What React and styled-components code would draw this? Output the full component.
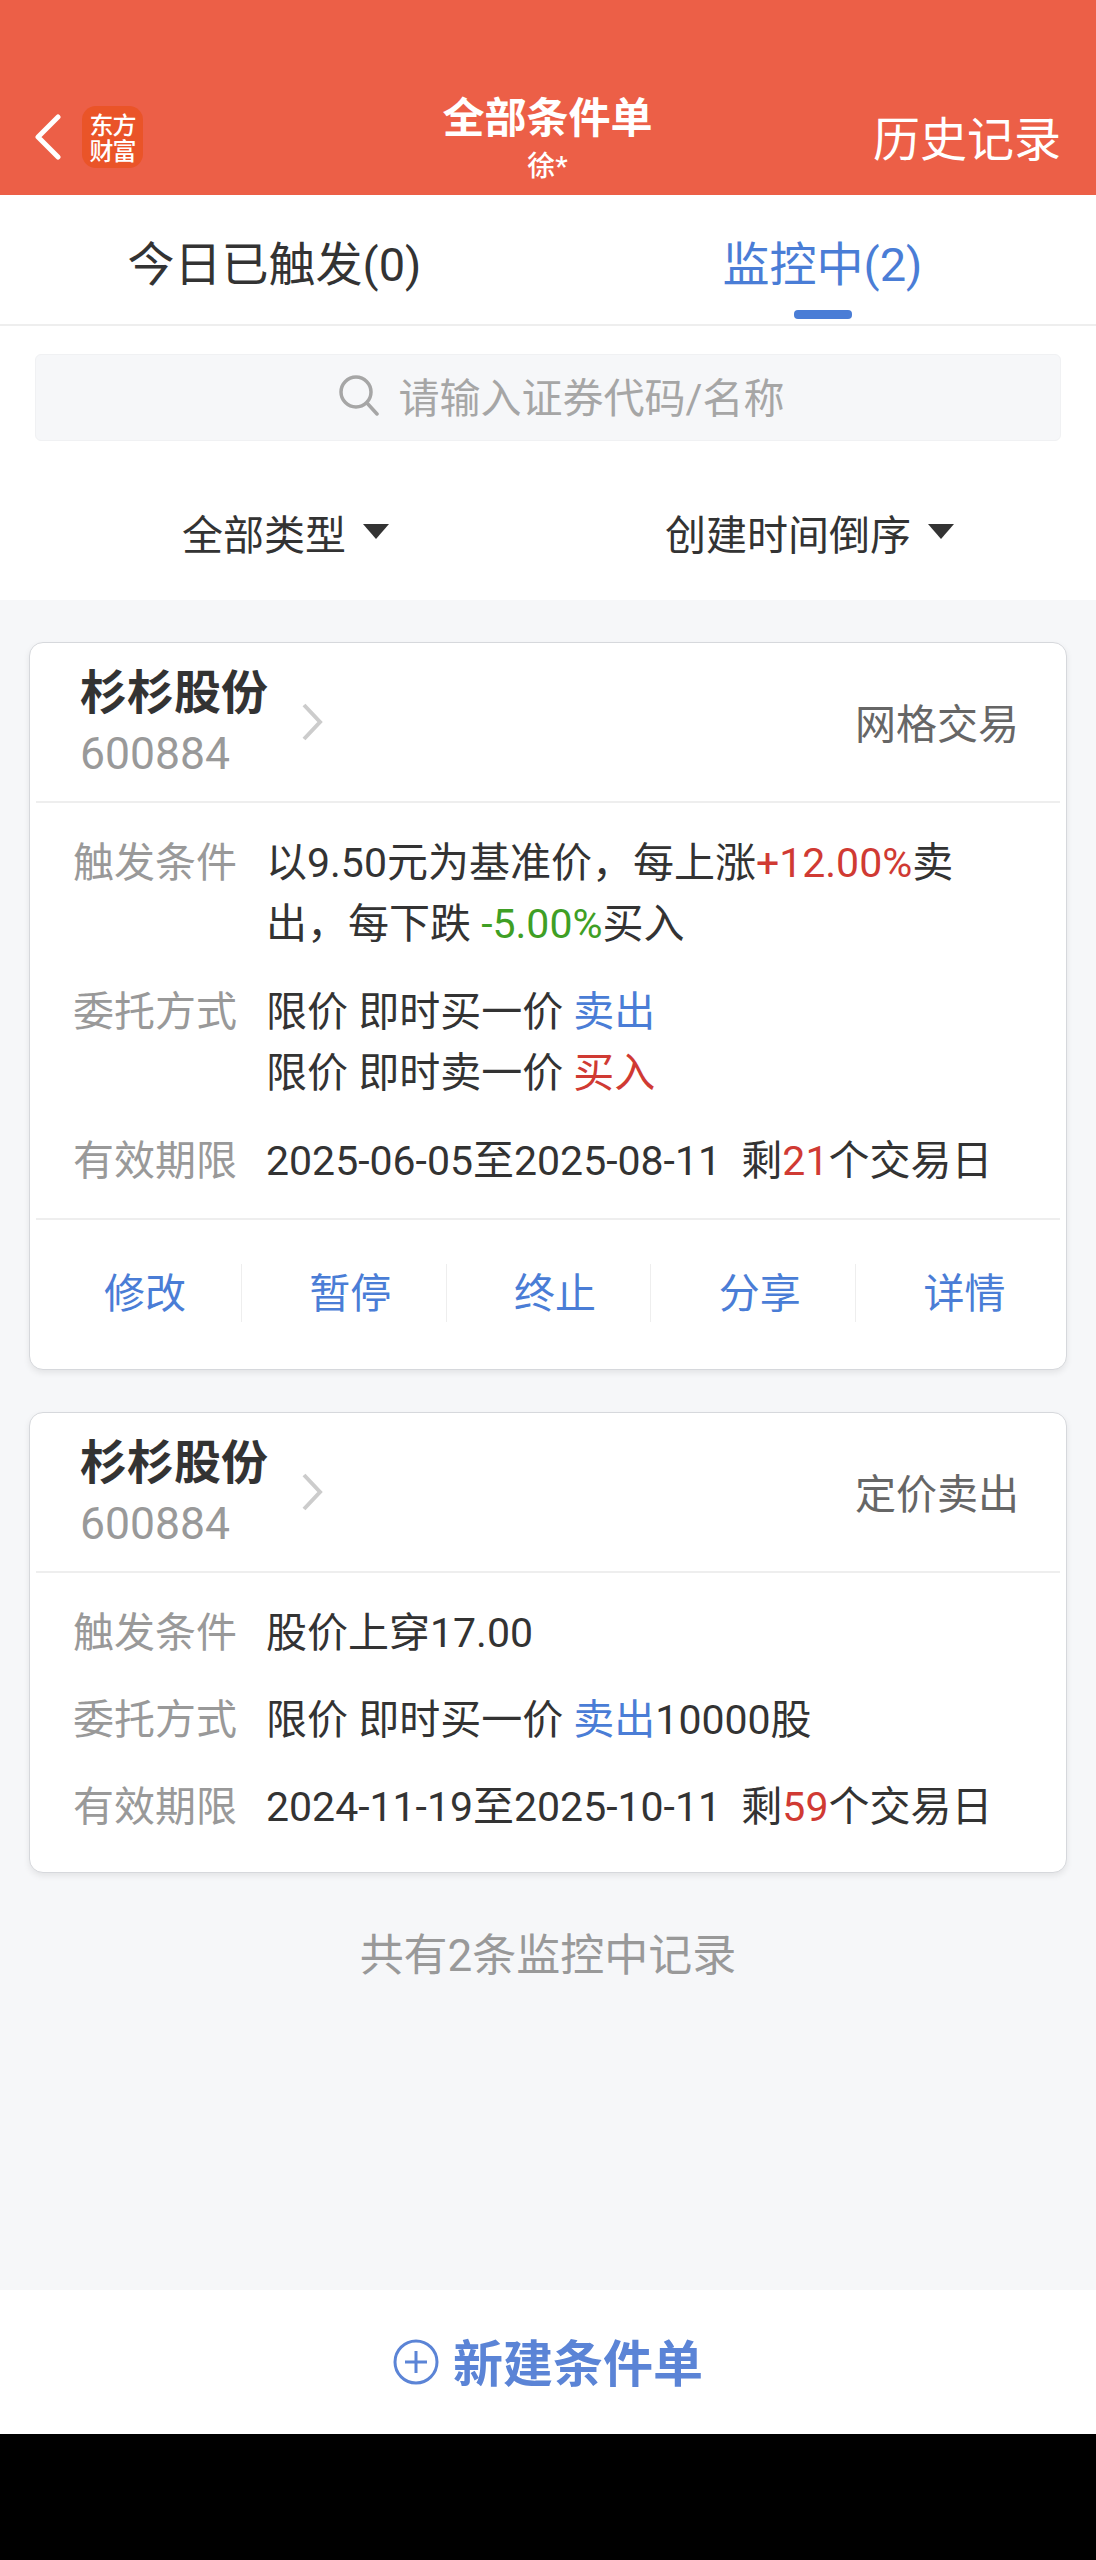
import React from 'react'
import styled, { createGlobalStyle } from 'styled-components'

const Global = createGlobalStyle`
  html, body { margin: 0; padding: 0; background: #000; }
  * { box-sizing: border-box; }
  body { font-family: Roboto, "Noto Sans CJK SC", sans-serif; }
`

const Page = styled.div`
  width: 1096px;
  height: 2560px;
  display: flex;
  flex-direction: column;
  background: #f6f7f9;
  overflow: hidden;
`
const Header = styled.header`
  height: 195px;
  flex: none;
  background: #ec5f47;
  color: #fff;
  display: grid;
  grid-template-columns: 1fr auto 1fr;
  align-items: end;
  padding: 0 35px 0 34px;
`
const HeaderLeft = styled.div`
  display: flex;
  align-items: center;
  gap: 20px;
  padding-bottom: 27px;
`
const Logo = styled.div`
  width: 61px;
  height: 62px;
  border-radius: 14px;
  background: #ea5428;
  color: #fff;
  font-family: "Noto Sans CJK SC", sans-serif;
  font-size: 24px;
  line-height: 26px;
  font-weight: 500;
  text-align: center;
  padding-top: 5px;
  letter-spacing: -1px;
`
const TitleBlock = styled.div`
  text-align: center;
  padding-bottom: 11px;
`
const Title = styled.div`
  font-size: 42px;
  line-height: 62px;
  font-weight: 700;
`
const Subtitle = styled.div`
  font-size: 28px;
  line-height: 34px;
  font-weight: 500;
`
const History = styled.div`
  font-size: 47px;
  line-height: 60px;
  text-align: right;
  padding-bottom: 25px;
`
const Tabs = styled.nav`
  height: 131px;
  flex: none;
  background: #fff;
  border-bottom: 2px solid #eeeeee;
  display: grid;
  grid-template-columns: 549px 1fr;
`
const Tab = styled.div`
  position: relative;
  display: flex;
  justify-content: center;
  align-items: center;
  padding-top: 1px;
  font-size: 47px;
  color: ${p => (p.$active ? '#4a7dd6' : '#333333')};
  ${p => p.$active && `
    &::after {
      content: '';
      position: absolute;
      left: 245px;
      bottom: 5px;
      width: 58px;
      height: 9px;
      border-radius: 4px;
      background: #4a7dd6;
    }
  `}
`
const Controls = styled.section`
  height: 274px;
  flex: none;
  background: #fff;
  padding: 28px 35px 0;
`
const Search = styled.div`
  height: 87px;
  border-radius: 6px;
  background: #f6f7f9;
  border: 1px solid #f0f1f3;
  display: flex;
  align-items: center;
  justify-content: center;
  gap: 19px;
  padding: 0 0 5px 26px;
  color: #a6a6a6;
  font-size: 41px;
`
const Filters = styled.div`
  display: grid;
  grid-template-columns: 501px 1fr;
  height: 159px;
  margin: 0 -35px;
  padding-top: 22px;
  align-items: center;
`
const Filter = styled.div`
  display: flex;
  justify-content: center;
  align-items: center;
  gap: 17px;
  font-size: 41px;
  color: #333333;
  padding-left: ${p => p.$pad}px;
  &::after {
    content: '';
    width: 0;
    height: 0;
    border-left: 13px solid transparent;
    border-right: 13px solid transparent;
    border-top: 15px solid #333333;
  }
`
const List = styled.main`
  flex: 1;
  padding: 42px 29px 0;
  display: flex;
  flex-direction: column;
  gap: 42px;
`
const Card = styled.article`
  background: #fff;
  border: 1px solid #d6d8dc;
  border-radius: 14px;
  box-shadow: 0 3px 6px rgba(0, 0, 0, 0.08);
  padding: 0 6px;
`
const CardHead = styled.div`
  height: 160px;
  border-bottom: 2px solid #eeeeee;
  display: flex;
  align-items: center;
  padding: 2px 41px 0 44px;
`
const Stock = styled.div`
  display: flex;
  flex-direction: column;
`
const StockName = styled.div`
  font-size: 47px;
  line-height: 62px;
  font-weight: 700;
  color: #333333;
`
const StockCode = styled.div`
  font-size: 44.5px;
  line-height: 61px;
  color: #999999;
`
const Chevron = styled.svg`
  width: 22px;
  height: 38px;
  margin: 0 0 3px 33px;
  fill: none;
  stroke: #cccccc;
  stroke-width: 4;
`
const OrderType = styled.div`
  margin: 0 0 5px auto;
  font-size: 41px;
  color: #666666;
`
const Rows = styled.div`
  padding: 30px 0 ${p => p.$bottom}px 37px;
  display: flex;
  flex-direction: column;
  gap: ${p => p.$gap}px;
`
const Row = styled.div`
  display: grid;
  grid-template-columns: 193px 1fr;
  font-size: 41px;
  line-height: 61px;
  color: #333333;
  white-space: nowrap;
`
const Label = styled.div`
  color: #999999;
`
const Red = styled.span`color: #d03a33;`
const Green = styled.span`color: #3f9f25;`
const Blue = styled.span`color: #4a7dd6;`
const Actions = styled.div`
  height: 151px;
  border-top: 2px solid #eeeeee;
  display: grid;
  grid-template-columns: repeat(5, 1fr);
  align-items: center;
  padding-bottom: 4px;
`
const Action = styled.div`
  height: 58px;
  display: flex;
  align-items: center;
  justify-content: center;
  padding: 0 0 5px 13px;
  font-size: 41px;
  color: #4a7dd6;
  & + & { border-left: 1px solid #eeeeee; }
`
const Summary = styled.div`
  text-align: center;
  font-size: 44px;
  line-height: 60px;
  color: #999999;
  margin-top: 11px;
`
const BottomBar = styled.footer`
  height: 144px;
  flex: none;
  background: #fff;
  display: flex;
  align-items: center;
  justify-content: center;
  gap: 14px;
  font-size: 50px;
  font-weight: 700;
  color: #5b84d6;
`
const BottomLabel = styled.span`
  padding-bottom: 5px;
`
const NavSpace = styled.div`
  height: 126px;
  flex: none;
  background: #000;
`

const StockHead = ({ type }) => (
  <CardHead>
    <Stock>
      <StockName>杉杉股份</StockName>
      <StockCode>600884</StockCode>
    </Stock>
    <Chevron viewBox="0 0 22 38"><path d="M3 2l16 17L3 36" /></Chevron>
    <OrderType>{type}</OrderType>
  </CardHead>
)

export default function App() {
  return (
    <Page>
      <Global />
      <Header>
        <HeaderLeft>
          <svg width="28" height="46" viewBox="0 0 28 46" fill="none" stroke="#fff" strokeWidth="5" strokeLinecap="round" strokeLinejoin="round">
            <path d="M24 3L4 23l20 20" />
          </svg>
          <Logo>东方<br />财富</Logo>
        </HeaderLeft>
        <TitleBlock>
          <Title>全部条件单</Title>
          <Subtitle>徐*</Subtitle>
        </TitleBlock>
        <History>历史记录</History>
      </Header>
      <Tabs>
        <Tab>今日已触发(0)</Tab>
        <Tab $active>监控中(2)</Tab>
      </Tabs>
      <Controls>
        <Search>
          <svg width="42" height="42" viewBox="0 0 42 42" fill="none" stroke="#a6a6a6" strokeWidth="3.5" strokeLinecap="round">
            <circle cx="18" cy="18" r="15" />
            <path d="M29 29l10 11" />
          </svg>
          请输入证券代码/名称
        </Search>
        <Filters>
          <Filter $pad={70}>全部类型</Filter>
          <Filter $pad={22}>创建时间倒序</Filter>
        </Filters>
      </Controls>
      <List>
        <Card>
          <StockHead type="网格交易" />
          <Rows $gap={27} $bottom={26}>
            <Row>
              <Label>触发条件</Label>
              <div>以9.50元为基准价，每上涨<Red>+12.00%</Red>卖<br />出，每下跌 <Green>-5.00%</Green>买入</div>
            </Row>
            <Row>
              <Label>委托方式</Label>
              <div>限价 即时买一价 <Blue>卖出</Blue><br />限价 即时卖一价 <Red>买入</Red></div>
            </Row>
            <Row>
              <Label>有效期限</Label>
              <div>2025-06-05至2025-08-11&nbsp; 剩<Red>21</Red>个交易日</div>
            </Row>
          </Rows>
          <Actions>
            <Action>修改</Action>
            <Action>暂停</Action>
            <Action>终止</Action>
            <Action>分享</Action>
            <Action>详情</Action>
          </Actions>
        </Card>
        <Card>
          <StockHead type="定价卖出" />
          <Rows $gap={26} $bottom={34}>
            <Row>
              <Label>触发条件</Label>
              <div>股价上穿17.00</div>
            </Row>
            <Row>
              <Label>委托方式</Label>
              <div>限价 即时买一价 <Blue>卖出</Blue>10000股</div>
            </Row>
            <Row>
              <Label>有效期限</Label>
              <div>2024-11-19至2025-10-11&nbsp; 剩<Red>59</Red>个交易日</div>
            </Row>
          </Rows>
        </Card>
        <Summary>共有2条监控中记录</Summary>
      </List>
      <BottomBar>
        <svg width="46" height="46" viewBox="0 0 46 46" fill="none" stroke="#5b84d6" strokeWidth="3">
          <circle cx="23" cy="23" r="21" />
          <path d="M23 12v22M12 23h22" />
        </svg>
        <BottomLabel>新建条件单</BottomLabel>
      </BottomBar>
      <NavSpace />
    </Page>
  )
}
